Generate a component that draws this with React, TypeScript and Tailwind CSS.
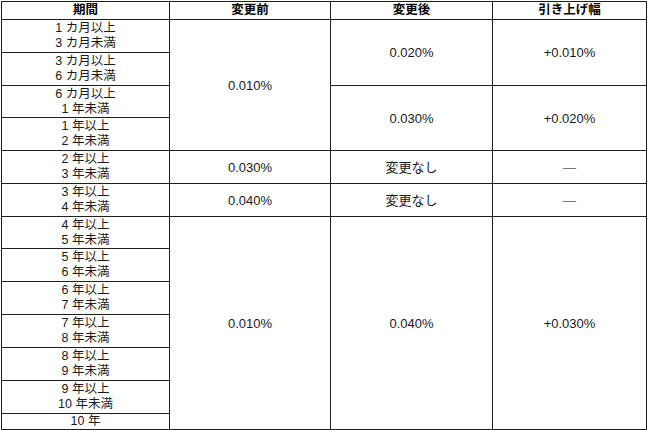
const periods: string[][] = [
  ["1 カ月以上", "3 カ月未満"],
  ["3 カ月以上", "6 カ月未満"],
  ["6 カ月以上", "1 年未満"],
  ["1 年以上", "2 年未満"],
  ["2 年以上", "3 年未満"],
  ["3 年以上", "4 年未満"],
  ["4 年以上", "5 年未満"],
  ["5 年以上", "6 年未満"],
  ["6 年以上", "7 年未満"],
  ["7 年以上", "8 年未満"],
  ["8 年以上", "9 年未満"],
  ["9 年以上", "10 年未満"],
  ["10 年"],
];

// cells that start on a given row: [before, after, diff] with row spans
type Span = { text: string; span: number };
const before: Record<number, Span> = {
  0: { text: "0.010%", span: 4 },
  4: { text: "0.030%", span: 1 },
  5: { text: "0.040%", span: 1 },
  6: { text: "0.010%", span: 7 },
};
const after: Record<number, Span> = {
  0: { text: "0.020%", span: 2 },
  2: { text: "0.030%", span: 2 },
  4: { text: "変更なし", span: 1 },
  5: { text: "変更なし", span: 1 },
  6: { text: "0.040%", span: 7 },
};
const diff: Record<number, Span> = {
  0: { text: "+0.010%", span: 2 },
  2: { text: "+0.020%", span: 2 },
  4: { text: "—", span: 1 },
  5: { text: "—", span: 1 },
  6: { text: "+0.030%", span: 7 },
};

const rowHeights = [33, 33, 32, 33, 33, 33, 32, 33, 33, 33, 33, 33, 16];

const cell = "border border-[#1f1f1f] p-0 text-center align-middle";

const App = () => {
  return (
    <div className="w-[650px] h-[430px] bg-white pl-[1px] pt-[1px] font-['Liberation_Sans','Noto_Sans_CJK_JP',sans-serif] text-[12.5px] leading-[15px] text-[#1a1a1a]">
      <table className="w-[645px] border-collapse table-fixed">
        <colgroup>
          <col className="w-[168px]" />
          <col className="w-[161px]" />
          <col className="w-[162px]" />
          <col className="w-[154px]" />
        </colgroup>
        <thead>
          <tr className="h-[18px]">
            {["期間", "変更前", "変更後", "引き上げ幅"].map((h) => (
              <th key={h} className={`${cell} font-bold text-black`}>
                {h}
              </th>
            ))}
          </tr>
        </thead>
        <tbody>
          {periods.map((lines, i) => (
            <tr key={i} style={{ height: rowHeights[i] }}>
              <td className={cell}>
                {lines.map((l) => (
                  <div key={l} className="leading-[15px]">
                    {l}
                  </div>
                ))}
              </td>
              {[before, after, diff].map((col, c) =>
                col[i] ? (
                  <td key={c} rowSpan={col[i].span} className={`${cell} text-[13px]`}>
                    {col[i].text === "—" ? (
                      <span className="text-[#777]">—</span>
                    ) : (
                      col[i].text
                    )}
                  </td>
                ) : null
              )}
            </tr>
          ))}
        </tbody>
      </table>
    </div>
  );
};

export default App;
